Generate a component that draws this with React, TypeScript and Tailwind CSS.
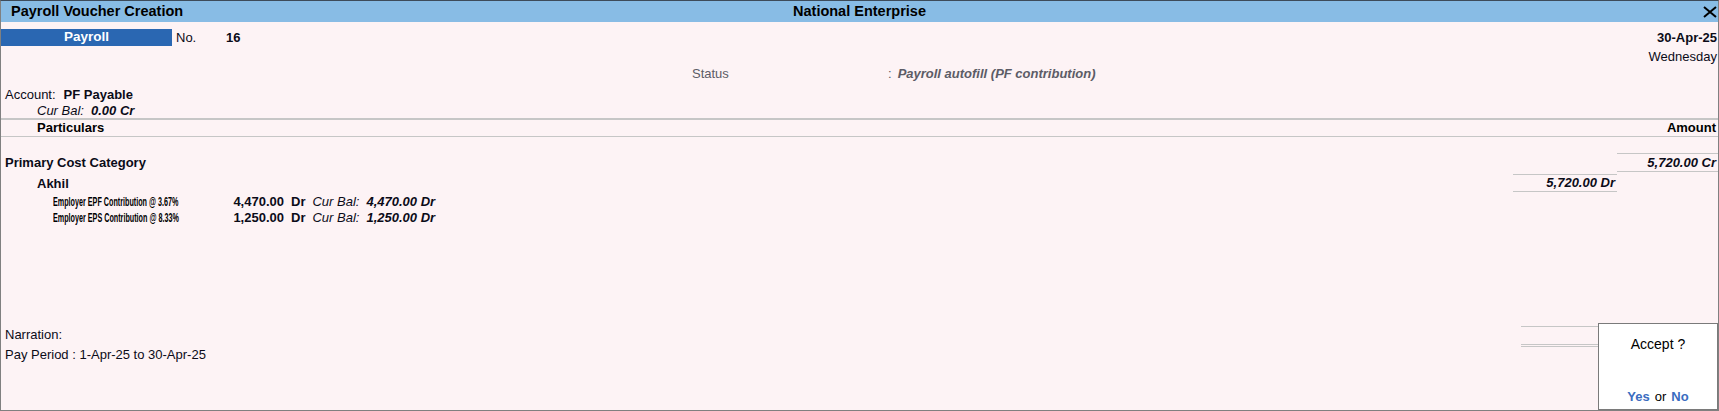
import React from "react";

function CloseIcon() {
  return (
    <svg width="14" height="12" viewBox="0 0 14 12" className="block">
      <path d="M1 1 L13 11 M13 1 L1 11" stroke="#000" strokeWidth="2" fill="none" />
    </svg>
  );
}

function TitleBar() {
  return (
    <div className="h-[21px] bg-[#88bce5] grid grid-cols-[1fr_auto_1fr] items-center font-bold text-black text-[14.5px] leading-[21px]">
      <div className="pl-[10px]">Payroll Voucher Creation</div>
      <div>National Enterprise</div>
      <div className="flex justify-end pr-[1px]">
        <CloseIcon />
      </div>
    </div>
  );
}

type Line = { name: string; amount: string; bal: string };

const lines: Line[] = [
  { name: "Employer EPF Contribution @ 3.67%", amount: "4,470.00", bal: "4,470.00 Dr" },
  { name: "Employer EPS Contribution @ 8.33%", amount: "1,250.00", bal: "1,250.00 Dr" },
];

export default function App() {
  return (
    <div className="w-[1719px] h-[411px] flex flex-col bg-[#fdf3f5] font-['Liberation_Sans',Arial,sans-serif] text-[13px] text-[#0b0b18] border-t border-t-[#3d4b5a] border-x border-b border-x-[#808080] border-b-[#808080] overflow-hidden">
      <TitleBar />

      <div className="relative flex-1 flex flex-col">
        {/* voucher type, number, date */}
        <div className="mt-[7px] h-[17px] flex items-center">
          <div className="w-[171px] h-full bg-[#2a67b2] text-white font-bold text-[13.5px] flex items-center justify-center">
            Payroll
          </div>
          <div className="ml-[4px] w-[50px]">No.</div>
          <div className="font-bold">16</div>
          <div className="ml-auto pr-[1px] font-bold">30-Apr-25</div>
        </div>
        <div className="mt-[3px] h-[16px] leading-[16px] flex justify-end pr-[1px]">Wednesday</div>

        {/* status */}
        <div className="mt-[1px] h-[16px] leading-[16px] flex text-[#5c5c66]">
          <div className="ml-[691px] w-[196px]">Status</div>
          <div>:</div>
          <div className="ml-[6px] font-bold italic">Payroll autofill (PF contribution)</div>
        </div>

        {/* account */}
        <div className="mt-[5px] h-[16px] leading-[16px] flex pl-[4px]">
          <span>Account:</span>
          <span className="ml-[8px] font-bold">PF Payable</span>
        </div>
        <div className="h-[15px] leading-[15px] flex pl-[36px] italic">
          <span>Cur Bal:</span>
          <span className="ml-[7px] font-bold">0.00 Cr</span>
        </div>

        {/* column headings */}
        <div className="border-t-2 border-b border-[#c6c6c6] h-[19px] flex items-center font-bold text-black">
          <div className="pl-[36px]">Particulars</div>
          <div className="ml-auto pr-[2px]">Amount</div>
        </div>

        {/* cost category */}
        <div className="mt-[16px] flex font-bold">
          <div className="pl-[4px] flex-1 flex items-center">Primary Cost Category</div>
          <div className="w-[101px] h-[19px] border-y border-[#c6c6c6] flex items-center justify-end pr-[2px] italic">
            5,720.00 Cr
          </div>
        </div>

        <div className="mt-[1px] flex font-bold">
          <div className="pl-[36px] flex-1 flex items-center">Akhil</div>
          <div className="w-[104px] h-[18px] border-y border-[#c6c6c6] flex items-center justify-end pr-[2px] italic">
            5,720.00 Dr
          </div>
          <div className="w-[101px]" />
        </div>

        <div className="mt-[1px] flex flex-col">
          {lines.map((l) => (
            <div key={l.name} className="h-[16px] leading-[16px] flex items-center whitespace-nowrap">
              <div className="w-[223px] pl-[52px]">
                <span className="inline-block origin-left scale-x-[0.6] text-[12px] font-bold text-black">{l.name}</span>
              </div>
              <div className="w-[60px] text-right font-bold">{l.amount}</div>
              <div className="ml-[7px] font-bold">Dr</div>
              <div className="ml-[7px] italic">Cur Bal:</div>
              <div className="ml-[7px] font-bold italic">{l.bal}</div>
            </div>
          ))}
        </div>

        {/* narration and total */}
        <div className="mt-[100px] flex items-start">
          <div className="pl-[4px] pt-[1px]">
            <div className="leading-[16px]">Narration:</div>
            <div className="mt-[4px] leading-[16px]">Pay Period : 1-Apr-25 to 30-Apr-25</div>
          </div>
          <div className="ml-auto w-[197px] h-[21px] border-t border-b-[3px] border-double border-[#c6c6c6]" />
        </div>

        {/* accept dialog */}
        <div className="absolute right-0 bottom-0 w-[120px] h-[87px] bg-white border border-[#7a7a7a] flex flex-col items-center justify-between pt-[12px] pb-[4px]">
          <div className="leading-[16px] text-[14px] text-black">Accept ?</div>
          <div className="leading-[16px]">
            <span className="font-bold text-[#3a6cbf]">Yes</span>
            <span className="mx-[5px] text-black">or</span>
            <span className="font-bold text-[#3a6cbf]">No</span>
          </div>
        </div>
      </div>
    </div>
  );
}
